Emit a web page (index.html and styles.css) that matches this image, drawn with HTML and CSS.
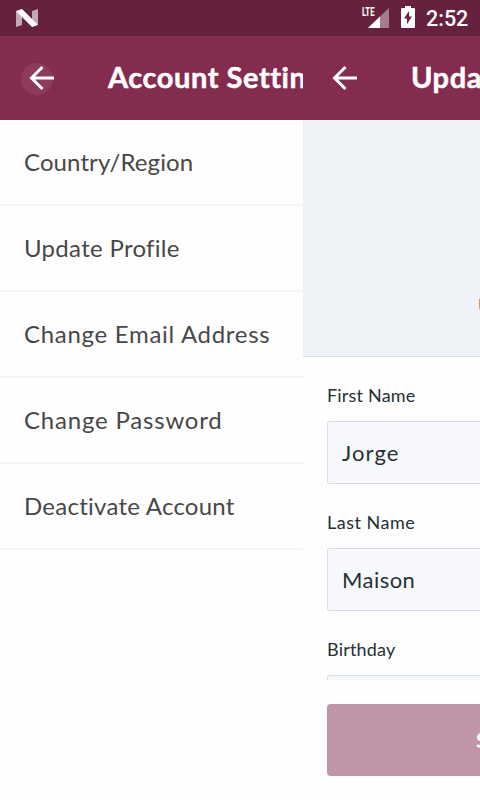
FILE: index.html
```
<!DOCTYPE html>
<html lang="en">
<head>
<meta charset="utf-8">
<meta name="viewport" content="width=device-width">
<title>Account Settings</title>
<link rel="stylesheet" href="styles.css">
</head>
<body>
<div class="status">
  <svg class="logo" width="22" height="18" viewBox="0 0 22 18"><path d="M0 2v16l6-2V4zM22 0v16l-6-2V2z" fill="#c3a9b5"/><path d="M0 2 6 0l16 16-6 2z" fill="#fff"/></svg>
  <div class="indicators">
    <div class="signal"><span class="lte">LTE</span><svg width="22" height="20" viewBox="0 0 22 20"><path d="M1 20 22 0v20z" fill="#a27d8e"/><path d="M1 20 13 8.600V20z" fill="#fff"/></svg></div>
    <svg class="battery" width="14" height="22" viewBox="0 0 14 22"><path d="M0 3q0-1 1-1h3V0h6v2h3q1 0 1 1v18q0 1-1 1H1q-1 0-1-1z" fill="#fff"/><path d="M8 5v5.500h3L6 18v-5.500H3z" fill="#65213d"/></svg>
    <span class="clock">2:52</span>
  </div>
</div>
<div class="screens">
  <section class="settings">
    <header class="bar">
      <button class="back pressed" aria-label="Back"><svg width="26" height="26" viewBox="0 0 26 26"><path d="M25 13H3M13.500 2 2.500 13l11 11" fill="none" stroke="#fff" stroke-width="3"/></svg></button>
      <h1>Account Settings</h1>
    </header>
    <ul class="list">
      <li><span class="country">Country/Region</span></li>
      <li><span class="update">Update Profile</span></li>
      <li><span class="email">Change Email Address</span></li>
      <li><span class="password">Change Password</span></li>
      <li><span class="deactivate">Deactivate Account</span></li>
    </ul>
  </section>
  <section class="profile">
    <header class="bar">
      <button class="back" aria-label="Back"><svg width="26" height="26" viewBox="0 0 26 26"><path d="M25 13H3M13.500 2 2.500 13l11 11" fill="none" stroke="#fff" stroke-width="3"/></svg></button>
      <h1>Update</h1>
    </header>
    <div class="photo"><span>U</span></div>
    <form class="form">
      <label>First Name</label>
      <div class="input jorge">Jorge</div>
      <label class="last">Last Name</label>
      <div class="input maison">Maison</div>
      <label>Birthday</label>
      <div class="input"></div>
    </form>
    <div class="footer"><div class="save">S</div></div>
  </section>
</div>
</body>
</html>
```
FILE: styles.css
```
* { box-sizing: border-box; }
body {
  margin: 0;
  width: 480px;
  height: 800px;
  overflow: hidden;
  background: #fefefe;
  font-family: Lato, "Liberation Sans", sans-serif;
  font-variant-ligatures: none;
}
.status {
  height: 36px;
  background: #65213d;
  display: flex;
  justify-content: space-between;
  padding: 0 11px 0 16px;
}
.logo { margin-top: 9px; }
.indicators { display: flex; }
.signal { display: flex; width: 27px; margin-right: 12px; }
.signal svg { flex: none; margin: 8px 0 0 -9px; }
.lte {
  width: 14px;
  flex: none;
  margin-top: 6px;
  color: #fff;
  font: 700 12.5px/12px Roboto, sans-serif;
  transform: scaleX(.62);
  transform-origin: 0 0;
}
.battery { margin: 6px 11px 0 0; }
.clock {
  width: 43px;
  color: #fff;
  font: 500 21.5px/38px Roboto, sans-serif;
  white-space: nowrap;
}
.screens { display: flex; height: 764px; }
.settings { width: 303px; flex: none; overflow: hidden; }
.profile { width: 177px; flex: none; overflow: hidden; display: flex; flex-direction: column; }
.bar {
  height: 84px;
  flex: none;
  background: #842c50;
  display: flex;
  align-items: center;
}
.back {
  width: 26px;
  height: 26px;
  flex: none;
  margin: 0 53px 0 29px;
  padding: 0;
  border: 0;
  background: none;
}
.back svg { display: block; }
.pressed::before {
  content: "";
  display: block;
  width: 32px;
  height: 32px;
  margin: -2px 0 -30px -8px;
  border-radius: 50%;
  background: #8d3a5c;
}
.pressed svg { position: relative; }
h1 {
  margin: -2px 0 0;
  color: #fff;
  font-size: 29px;
  font-weight: 700;
  line-height: 36px;
  letter-spacing: .55px;
  white-space: nowrap;
  -webkit-text-stroke: .5px #fff;
}
.list { margin: 0; padding: 0; list-style: none; }
.list li {
  height: 86px;
  padding-left: 24px;
  border-bottom: 2px solid #f4f5f6;
  color: #484848;
  font-size: 24px;
  line-height: 84px;
  white-space: nowrap;
}
.country { letter-spacing: .1px; }
.update { letter-spacing: .3px; }
.email { letter-spacing: .7px; }
.password { letter-spacing: .8px; }
.deactivate { letter-spacing: .25px; }
.photo {
  height: 237px;
  flex: none;
  background: #eff3f7;
  border-bottom: 1px solid #d5dfe8;
  padding: 174px 0 0 175px;
  color: #484848;
  font-size: 18px;
  line-height: 22px;
}
.form {
  height: 323px;
  flex: none;
  overflow: hidden;
  padding: 27px 0 0 24px;
}
label {
  display: block;
  height: 37px;
  color: #263035;
  font-size: 18px;
  line-height: 22px;
  letter-spacing: .2px;
}
.last { letter-spacing: .5px; }
.input {
  height: 63px;
  margin-bottom: 27px;
  border: 1px solid #d6dfe6;
  border-right: 0;
  border-radius: 3px 0 0 3px;
  background: #f6f8fb;
  padding-left: 14px;
  color: #263035;
  font-size: 22px;
  line-height: 62px;
}
.jorge { letter-spacing: 1.1px; }
.maison { letter-spacing: .45px; }
.footer { padding: 24px 0 0 24px; }
.save {
  height: 72px;
  border-radius: 4px 0 0 4px;
  background: #c095a7;
  padding-left: 149px;
  color: #fff;
  font-size: 20px;
  font-weight: 700;
  line-height: 72px;
  overflow: hidden;
}
```
